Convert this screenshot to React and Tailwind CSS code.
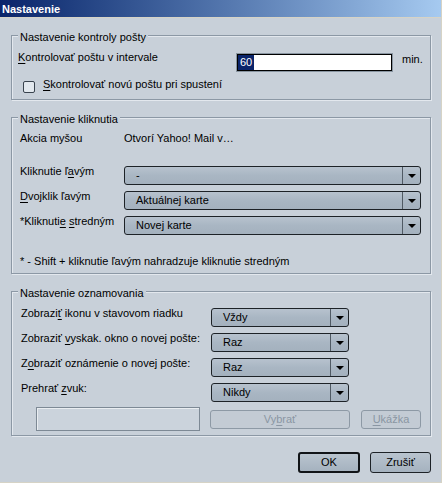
import React from "react";

const U = ({ children }) => <span className="underline underline-offset-[2px]">{children}</span>;

const Group = ({ title, h, className = "", children }) => {
  return (
    <div
      className={`w-[420px] ${h} flex flex-col border border-[#8c98a5] shadow-[inset_1px_1px_0_#e3e8ee,1px_1px_0_#e3e8ee] ${className}`}
    >
      <span className="-mt-[5px] ml-[6px] self-start px-[2px] leading-[13px] bg-[#c8d0d9]">
        {title}
      </span>
      {children}
    </div>
  );
};

const Combo = ({ value, w }) => {
  return (
    <div
      className={`${w} h-[19px] flex shrink-0 rounded-[3px] border border-[#1d2227] bg-gradient-to-b from-[#b7c2ce] via-[#a9b6c3] to-[#a4b1be]`}
    >
      <div className="flex-1 pl-[11px] leading-[17px]">{value}</div>
      <div className="w-[18px] flex items-center justify-center border-l border-[#505a64]">
        <div className="w-0 h-0 border-x-[4px] border-x-transparent border-t-[4px] border-t-black" />
      </div>
    </div>
  );
};

const Button = ({ children, w, def, disabled }) => {
  let cls = "border border-[#1d2227] bg-gradient-to-b from-[#b9c4cf] to-[#a5b2bf] text-black";
  if (def) cls = "border-2 border-[#111418] bg-gradient-to-b from-[#b9c4cf] to-[#a5b2bf] text-black";
  if (disabled) cls = "border border-[#8d99a5] bg-[#c3cbd4] text-[#8a96a3]";
  return (
    <div className={`${w} flex items-center justify-center rounded-[3px] ${cls}`}>{children}</div>
  );
};

export default function App() {
  return (
    <div className="w-[442px] h-[483px] bg-[#d6d3c6] font-['Liberation_Sans',Arial,sans-serif] text-[11px] text-black">
      <div className="w-[441px] h-[482px] flex flex-col bg-[#c8d0d9]">
        <div className="h-[18px] shrink-0 border-b border-[#d6d3c6] bg-gradient-to-r from-[#0a246a] to-[#a6caf0] pl-[2px] pt-[1px] leading-[16px] font-bold text-white">
          Nastavenie
        </div>

        <div className="flex flex-col pl-[11px] pt-[17px]">
          <Group title="Nastavenie kontroly pošty" h="h-[65px]">
            <div className="mt-[9px] flex items-start pl-[6px]">
              <span className="-mt-[2px] w-[218px] leading-[13px]">
                <U>K</U>ontrolovať poštu v intervale
              </span>
              <div className="w-[157px] h-[19px] flex items-center border border-[#8995a1] bg-white pl-[1px] shadow-[inset_0_0_0_1px_#000]">
                <span className="h-[15px] px-[2px] bg-[#0a246a] text-white leading-[15px]">60</span>
              </div>
              <span className="ml-[9px] leading-[13px]">min.</span>
            </div>
            <div className="mt-[9px] flex items-start pl-[11px]">
              <div className="w-[12px] h-[12px] rounded-[2px] border border-[#39434e] bg-[#e2e8ee]" />
              <span className="-mt-[3px] ml-[8px] leading-[13px]">
                <U>S</U>kontrolovať novú poštu pri spustení
              </span>
            </div>
          </Group>

          <Group title="Nastavenie kliknutia" h="h-[157px]" className="mt-[17px]">
            <div className="mt-[6px] flex pl-[8px] leading-[13px]">
              <span className="w-[104px]">Akcia myšou</span>
              <span>Otvorí Yahoo! Mail v…</span>
            </div>
            <div className="mt-[21px] flex flex-col gap-[6px] pl-[8px]">
              <div className="flex items-start">
                <span className="-mt-[1px] w-[104px] leading-[13px]">
                  Kliknutie ľ<U>a</U>vým
                </span>
                <Combo value="-" w="w-[297px]" />
              </div>
              <div className="flex items-start">
                <span className="-mt-[1px] w-[104px] leading-[13px]">
                  <U>D</U>vojklik ľavým
                </span>
                <Combo value="Aktuálnej karte" w="w-[297px]" />
              </div>
              <div className="flex items-start">
                <span className="-mt-[1px] w-[104px] leading-[13px]">
                  *Kliknuti<U>e</U> <U>s</U>tredným
                </span>
                <Combo value="Novej karte" w="w-[297px]" />
              </div>
            </div>
            <div className="mt-[20px] pl-[8px] leading-[13px]">
              * - Shift + kliknutie ľavým nahradzuje kliknutie stredným
            </div>
          </Group>

          <Group title="Nastavenie oznamovania" h="h-[145px]" className="mt-[17px]">
            <div className="mt-[8px] flex flex-col gap-[6px] pl-[9px]">
              <div className="flex items-start">
                <span className="-mt-[1px] w-[190px] leading-[13px]">
                  Zobrazi<U>ť</U> ikonu v stavovom riadku
                </span>
                <Combo value="Vždy" w="w-[138px]" />
              </div>
              <div className="flex items-start">
                <span className="-mt-[1px] w-[190px] leading-[13px]">
                  Zobraziť <U>v</U>yskak. okno o novej pošte:
                </span>
                <Combo value="Raz" w="w-[138px]" />
              </div>
              <div className="flex items-start">
                <span className="-mt-[1px] w-[190px] leading-[13px]">
                  Z<U>o</U>braziť oznámenie o novej pošte:
                </span>
                <Combo value="Raz" w="w-[138px]" />
              </div>
              <div className="flex items-start">
                <span className="-mt-[1px] w-[190px] leading-[13px]">
                  Prehrať <U>z</U>vuk:
                </span>
                <Combo value="Nikdy" w="w-[138px]" />
              </div>
            </div>
            <div className="mt-[5px] flex items-center pl-[24px]">
              <div className="w-[164px] h-[24px] border border-[#7d8995] bg-[#cbd3dc] shadow-[inset_1px_1px_0_#e9edf1]" />
              <div className="ml-[10px] h-[19px] flex">
                <Button w="w-[140px]" disabled>
                  <span>
                    Vy<U>b</U>rať
                  </span>
                </Button>
              </div>
              <div className="ml-[11px] h-[19px] flex">
                <Button w="w-[60px]" disabled>
                  <span>
                    <U>U</U>kážka
                  </span>
                </Button>
              </div>
            </div>
          </Group>
        </div>

        <div className="mt-[16px] flex justify-end gap-[10px] pr-[10px]">
          <div className="h-[21px] flex">
            <Button w="w-[62px]" def>
              OK
            </Button>
          </div>
          <div className="h-[21px] flex">
            <Button w="w-[61px]">Zrušiť</Button>
          </div>
        </div>
      </div>
    </div>
  );
}
